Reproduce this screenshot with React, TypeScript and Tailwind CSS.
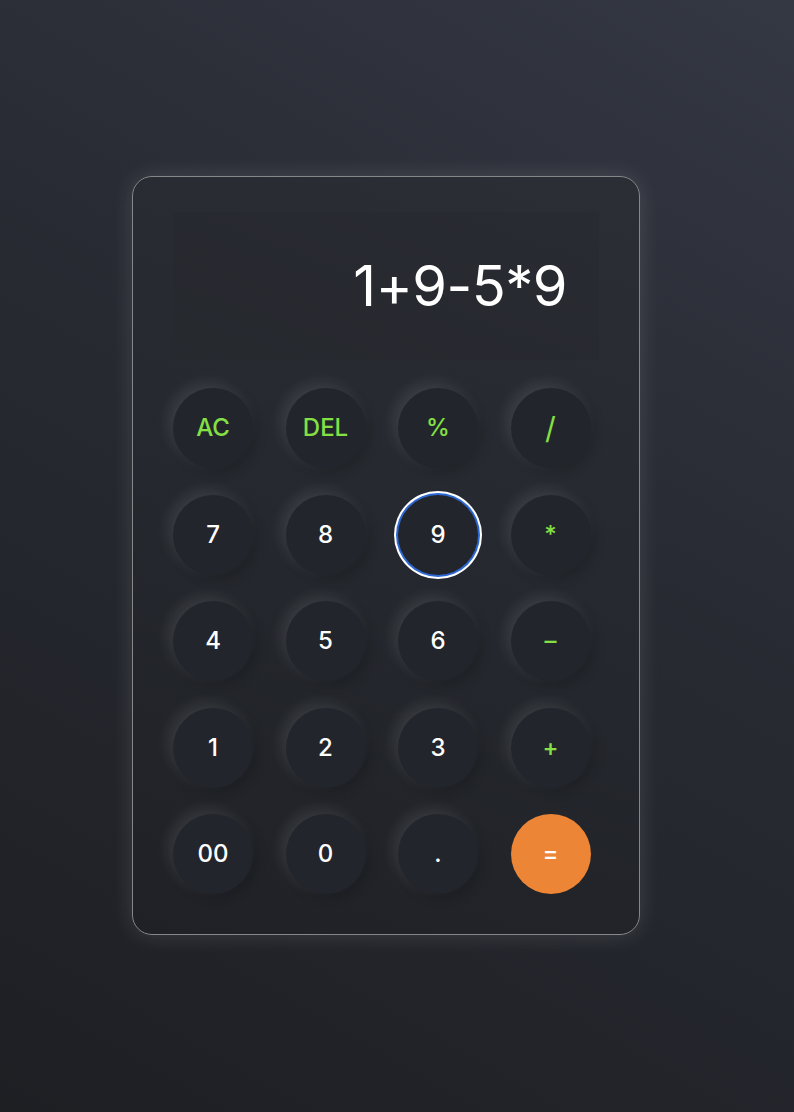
import React from "react";

type Key = { label: string; kind: "num" | "op" | "eq"; focus?: boolean };

const keys: Key[] = [
  { label: "AC", kind: "op" },
  { label: "DEL", kind: "op" },
  { label: "%", kind: "op" },
  { label: "/", kind: "op" },
  { label: "7", kind: "num" },
  { label: "8", kind: "num" },
  { label: "9", kind: "num", focus: true },
  { label: "*", kind: "op" },
  { label: "4", kind: "num" },
  { label: "5", kind: "num" },
  { label: "6", kind: "num" },
  { label: "–", kind: "op" },
  { label: "1", kind: "num" },
  { label: "2", kind: "num" },
  { label: "3", kind: "num" },
  { label: "+", kind: "op" },
  { label: "00", kind: "num" },
  { label: "0", kind: "num" },
  { label: ".", kind: "num" },
  { label: "=", kind: "eq" },
];

function CalcKey({ k }: { k: Key }) {
  let cls =
    "h-[80px] w-[80px] rounded-full flex items-center justify-center text-[24px] leading-none font-medium ";
  if (k.kind === "eq") {
    cls += "bg-[#ec8536] text-white";
  } else {
    cls += "bg-[#22252b] ";
    cls += k.kind === "op" ? "text-[#84e044] " : "text-white ";
    cls += k.focus
      ? "shadow-[0_0_0_2px_#2d68d2,0_0_0_4px_#ffffff]"
      : "shadow-[-5px_-5px_14px_rgba(255,255,255,0.1),4px_4px_12px_rgba(0,0,0,0.18)]";
  }
  return (
    <button className={cls}>
      <span className={k.label === "/" ? "text-[30px] font-normal" : ""}>{k.label}</span>
    </button>
  );
}

export default function App() {
  return (
    <div
      className="min-h-[1112px] w-full bg-[linear-gradient(210deg,#343843_0%,#282b33_40%,#1d1f23_100%)] pt-[176px]"
      style={{ fontFamily: "Inter, 'Noto Sans', sans-serif" }}
    >
      <div className="ml-[132px] w-[508px] rounded-[20px] border border-[#858789] bg-[linear-gradient(200deg,#2b2e35_0%,#25282e_50%,#1f2126_100%)] px-[40px] pt-[35px] pb-[40px] shadow-[0_0_22px_rgba(255,255,255,0.13)]">
        <div className="h-[148px] bg-[rgba(0,0,0,0.025)] flex items-center justify-end pr-[32px]">
          <span className="text-[56px] leading-none text-white tracking-[-0.5px]">1+9-5*9</span>
        </div>
        <div className="mt-[28px] grid grid-cols-[repeat(4,80px)] gap-x-[32.5px] gap-y-[26.5px]">
          {keys.map((k, i) => (
            <CalcKey key={i} k={k} />
          ))}
        </div>
      </div>
    </div>
  );
}
